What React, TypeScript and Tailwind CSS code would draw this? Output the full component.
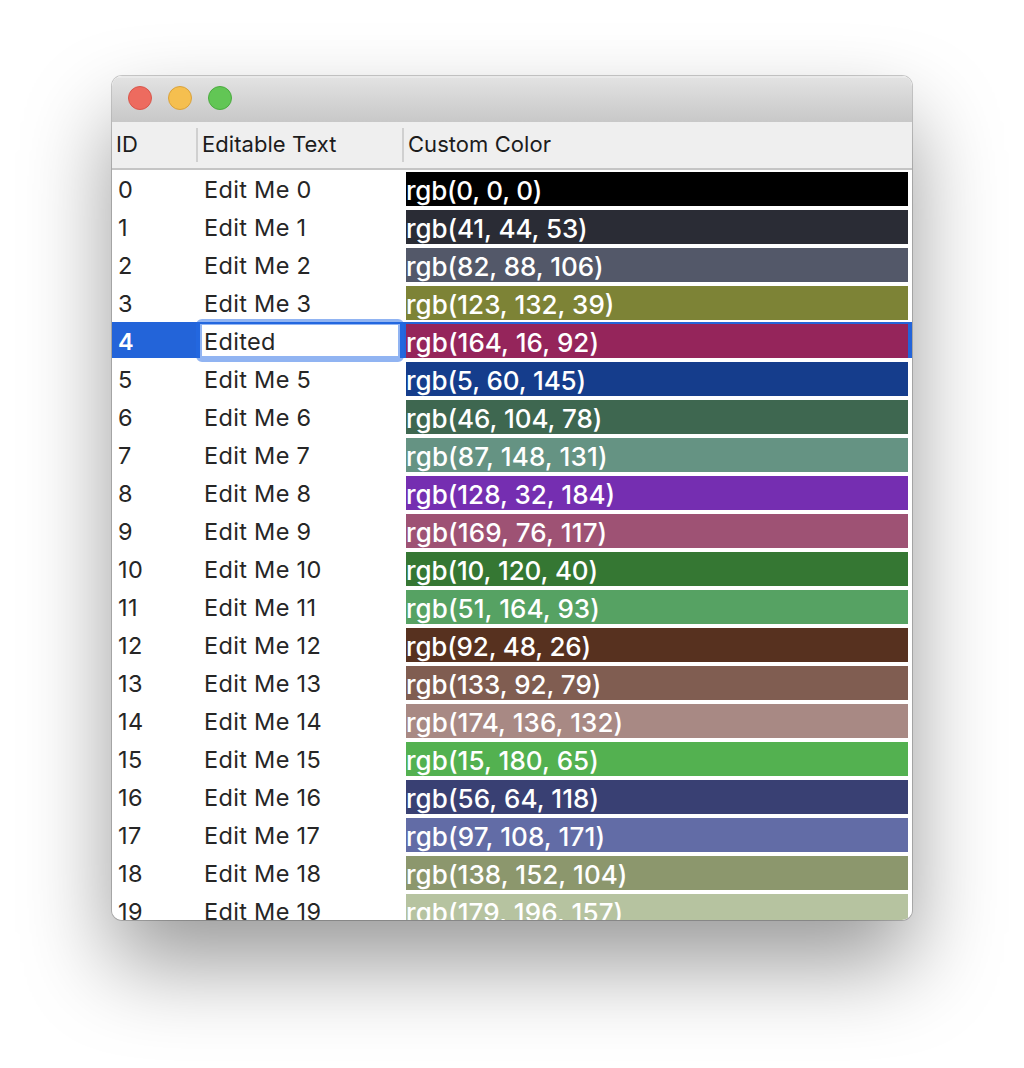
type Row = { id: number; label: string; rgb: string; swatch: string };

const rows: Row[] = [
  { id: 0, label: "Edit Me 0", rgb: "rgb(0, 0, 0)", swatch: "bg-[#000000] tracking-[-0.24px]" },
  { id: 1, label: "Edit Me 1", rgb: "rgb(41, 44, 53)", swatch: "bg-[#2a2c35] tracking-[-0.08px]" },
  { id: 2, label: "Edit Me 2", rgb: "rgb(82, 88, 106)", swatch: "bg-[#535869] tracking-[-0.06px]" },
  { id: 3, label: "Edit Me 3", rgb: "rgb(123, 132, 39)", swatch: "bg-[#7d8336] tracking-[0px]" },
  { id: 4, label: "Edited", rgb: "rgb(164, 16, 92)", swatch: "bg-[#95255b] tracking-[0.06px]" },
  { id: 5, label: "Edit Me 5", rgb: "rgb(5, 60, 145)", swatch: "bg-[#153d8c] tracking-[-0.12px]" },
  { id: 6, label: "Edit Me 6", rgb: "rgb(46, 104, 78)", swatch: "bg-[#3e6750] tracking-[-0.06px]" },
  { id: 7, label: "Edit Me 7", rgb: "rgb(87, 148, 131)", swatch: "bg-[#659383] tracking-[0.12px]" },
  { id: 8, label: "Edit Me 8", rgb: "rgb(128, 32, 184)", swatch: "bg-[#752eb1] tracking-[0px]" },
  { id: 9, label: "Edit Me 9", rgb: "rgb(169, 76, 117)", swatch: "bg-[#9e5274] tracking-[0.12px]" },
  { id: 10, label: "Edit Me 10", rgb: "rgb(10, 120, 40)", swatch: "bg-[#357733] tracking-[-0.1px]" },
  { id: 11, label: "Edit Me 11", rgb: "rgb(51, 164, 93)", swatch: "bg-[#56a263] tracking-[0.06px]" },
  { id: 12, label: "Edit Me 12", rgb: "rgb(92, 48, 26)", swatch: "bg-[#57311f] tracking-[-0.18px]" },
  { id: 13, label: "Edit Me 13", rgb: "rgb(133, 92, 79)", swatch: "bg-[#805d51] tracking-[-0.06px]" },
  { id: 14, label: "Edit Me 14", rgb: "rgb(174, 136, 132)", swatch: "bg-[#a88984] tracking-[0.06px]" },
  { id: 15, label: "Edit Me 15", rgb: "rgb(15, 180, 65)", swatch: "bg-[#53b150] tracking-[0.06px]" },
  { id: 16, label: "Edit Me 16", rgb: "rgb(56, 64, 118)", swatch: "bg-[#394073] tracking-[0.06px]" },
  { id: 17, label: "Edit Me 17", rgb: "rgb(97, 108, 171)", swatch: "bg-[#626ca6] tracking-[0.1px]" },
  { id: 18, label: "Edit Me 18", rgb: "rgb(138, 152, 104)", swatch: "bg-[#8c976d] tracking-[0.06px]" },
  { id: 19, label: "Edit Me 19", rgb: "rgb(179, 196, 157)", swatch: "bg-[#b6c3a0] tracking-[0.1px]" },
];

const lights = ["bg-[#ed6b5f] border-[#d8574c]", "bg-[#f5bf4f] border-[#d9a23c]", "bg-[#62c655] border-[#4cab40]"];

function TitleBar() {
  return (
    <div className="flex h-[46px] shrink-0 gap-4 border-t-2 border-t-[#e9e9e9] bg-linear-to-b from-[#e2e2e2] to-[#c8c8c8] pt-2 pl-4">
      {lights.map((c) => (
        <span key={c} className={`size-6 rounded-full border ${c}`} />
      ))}
    </div>
  );
}

function Header() {
  return (
    <div className="flex h-12 shrink-0 items-start border-b-2 border-[#c5c5c5] bg-[#efefef] pt-1.5 text-[22px] leading-[32px] tracking-[0.05px] text-[#1c1c1c]">
      <div className="h-[34px] w-[86px] border-r-2 border-[#d0d0d0] pl-1">ID</div>
      <div className="h-[34px] w-[206px] border-r-2 border-[#d0d0d0] pl-1">Editable Text</div>
      <div className="pl-1">Custom Color</div>
    </div>
  );
}

function TableRow({ row }: { row: Row }) {
  const selected = row.id === 4;
  return (
    <div className={`mb-0.5 flex h-9 shrink-0 ${selected ? "bg-[#2364d9]" : ""}`}>
      <div className={`w-[88px] pl-1.5 leading-[39px] ${selected ? "font-semibold text-white" : "text-[#262626]"}`}>{row.id}</div>
      {selected ? (
        <div className="relative mt-0.5 h-[34px] w-[200px] bg-white pl-1 leading-[35px] text-[#262626]">
          {row.label}
          <span className="absolute -inset-x-1 -top-[5px] -bottom-1 rounded-[6px] border-6 border-[#2469e5]/50" />
        </div>
      ) : (
        <div className="w-[200px] pl-1 leading-[39px] text-[#262626]">{row.label}</div>
      )}
      <div className={`mt-0.5 ml-1.5 mr-1 h-[34px] min-w-0 flex-1 text-[26px] leading-[38px] font-medium whitespace-nowrap text-white ${row.swatch}`}>
        {row.rgb}
      </div>
    </div>
  );
}

export default function App() {
  return (
    <div className="flex h-[1068px] w-[1024px] items-start justify-center overflow-hidden bg-white pt-[76px] font-['Inter',sans-serif]">
      <div className="rounded-[10px] shadow-[0_0_0_1px_rgba(0,0,0,0.2),0_44px_88px_rgba(0,0,0,0.4)]">
        <div className="flex h-[844px] w-[800px] flex-col overflow-hidden rounded-[10px] bg-white">
          <TitleBar />
          <Header />
          <div className="flex min-h-0 flex-1 flex-col overflow-hidden text-[23.5px] tracking-[0.32px]">
            {rows.map((r) => (
              <TableRow key={r.id} row={r} />
            ))}
          </div>
        </div>
      </div>
    </div>
  );
}
